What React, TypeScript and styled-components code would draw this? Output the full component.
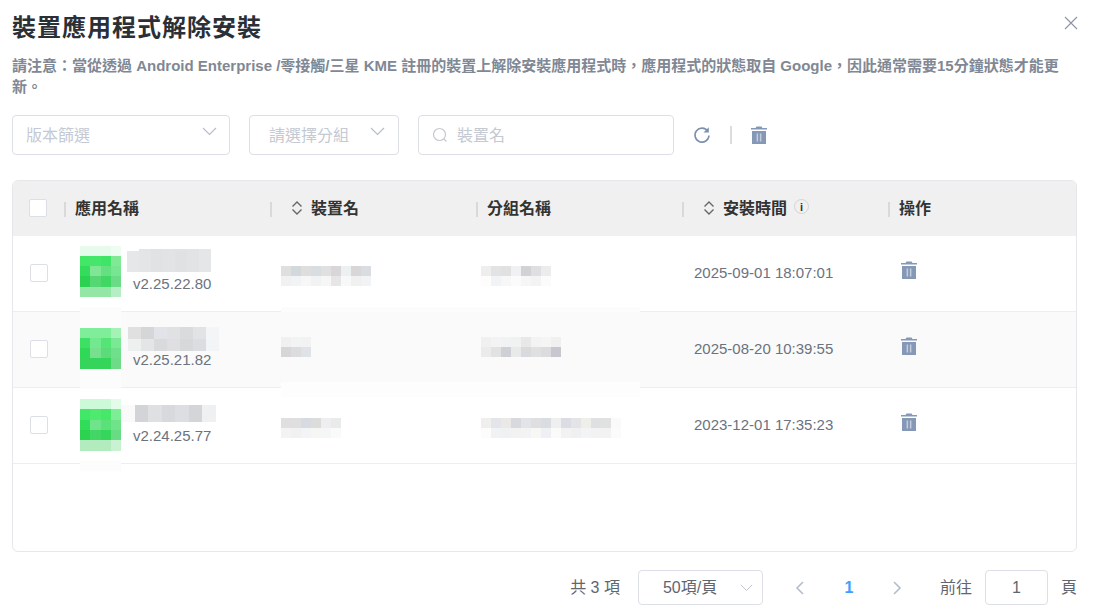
import React from 'react'
import styled, { createGlobalStyle } from 'styled-components'

const FONT = '"Liberation Sans", "Noto Sans CJK TC", sans-serif'

const GlobalStyle = createGlobalStyle`
  html, body {
    margin: 0;
    height: 608px;
    overflow: hidden;
    background: #fff;
    font-family: ${FONT};
  }
`

type MosaicRow = { h: number; cells: string[] }

const Mosaic: React.FC<{ rows: MosaicRow[]; cellWidth: number; className?: string }> = ({
  rows,
  cellWidth,
  className,
}) => {
  const height = rows.reduce((sum, r) => sum + r.h, 0)
  const width = Math.max(...rows.map((r) => r.cells.length)) * cellWidth
  let y = 0
  return (
    <svg className={className} width={width} height={height} shapeRendering="crispEdges">
      {rows.map((row, i) => {
        const top = y
        y += row.h
        return row.cells.map((color, j) =>
          color ? (
            <rect key={`${i}-${j}`} x={j * cellWidth} y={top} width={cellWidth} height={row.h} fill={color} />
          ) : null,
        )
      })}
    </svg>
  )
}

const none = ['', '', '', '']
const pale = (c: string): string[] => [c, c, c, c]

const apps: {
  version: string
  icon: MosaicRow[]
  name: MosaicRow[]
  nameX: number
  nameY: number
  nameCell: number
}[] = [
  {
    version: 'v2.25.22.80',
    icon: [
      { h: 12, cells: none },
      { h: 10, cells: ['#e6fbec', '#e6fbec', '#e6fbec', '#effcf2'] },
      { h: 10, cells: ['#42e768', '#45e66a', '#3fe566', '#7fe996'] },
      { h: 10, cells: ['#33dc5a', '#7fe696', '#64e080', '#78e592'] },
      { h: 11, cells: ['#2bd150', '#55d873', '#41d764', '#6cdb88'] },
      { h: 10, cells: ['#93e6a6', '#93e6a6', '#93e6a6', '#b6eec3'] },
      { h: 10, cells: none },
      { h: 4, cells: pale('#fcfcfc') },
    ],
    name: [
      { h: 2, cells: ['', '#e3e4e6', '#e1e2e4', '#e2e3e5', '#e1e2e4', '#e2e3e5', '#e5e6e8'] },
      { h: 21, cells: ['#e6e7e9', '#e4e5e7', '#e1e2e4', '#e2e3e5', '#e0e1e3', '#e2e3e5', '#e5e6e8'] },
    ],
    nameX: 6,
    nameY: 13,
    nameCell: 12,
  },
  {
    version: 'v2.25.21.82',
    icon: [
      { h: 18, cells: pale('#fcfcfc') },
      { h: 10, cells: ['#80ed9a', '#80ed9a', '#80ed9a', '#a5f2b6'] },
      { h: 10, cells: ['#3de063', '#72e98f', '#55e577', '#7ae995'] },
      { h: 10, cells: ['#2fd957', '#76e08f', '#5cdc79', '#70df8b'] },
      { h: 11, cells: ['#35d45a', '#35d45a', '#35d45a', '#6edb88'] },
      { h: 20, cells: pale('#fcfcfc') },
    ],
    name: [
      { h: 12, cells: ['#e0e0e0', '#d5d6d8', '#e2e3e8', '#e0e1e3', '#dadbdd', '#e2e3e5', '#f4f5f7'] },
      { h: 12, cells: ['#eeefef', '#e4e5e7', '#d9dadc', '#dfdfe2', '#d7d8da', '#dcdde0', '#f3f4f6'] },
    ],
    nameX: 7,
    nameY: 15,
    nameCell: 13,
  },
  {
    version: 'v2.24.25.77',
    icon: [
      { h: 13, cells: none },
      { h: 10, cells: ['#ccf9d7', '#ccf9d7', '#ccf9d7', '#e3fbe9'] },
      { h: 11, cells: ['#41e867', '#4ee96f', '#47e86a', '#7ded96'] },
      { h: 10, cells: ['#31dd58', '#70e48b', '#5be17a', '#6fe38a'] },
      { h: 10, cells: ['#2bd350', '#42d765', '#36d55b', '#68dc84'] },
      { h: 11, cells: ['#b2ecbe', '#b2ecbe', '#b2ecbe', '#c9f2d2'] },
      { h: 10, cells: none },
      { h: 10, cells: pale('#fcfcfc') },
    ],
    name: [
      { h: 17, cells: ['#fafafb', '#d2d4d8', '#dfe0e2', '#d8d9dc', '#dddee1', '#d4d5d9', '#eef0f2'] },
    ],
    nameX: 0,
    nameY: 17,
    nameCell: 13.5,
  },
]

const rowsData: {
  device: MosaicRow[]
  group: MosaicRow[]
  top: number
  time: string
}[] = [
  {
    device: [
      { h: 10, cells: ['#dfdfdf', '#d3d8dc', '#dededd', '#d8dde1', '#e0e0e0', '#d8d6d8', '#ecf0f0', '#d8d6d8', '#d9dde1'] },
      { h: 10, cells: ['#f1f1f1', '#f2f3f4', '#f7f7f7', '#f1f2f4', '#f6f6f6', '#e6e6e6', '#f7f8f8', '#f0f0f0', '#f2f3f5'] },
    ],
    group: [
      { h: 10, cells: ['#eeeeee', '#e2e3e5', '#e1e1e1', '#f0f1f3', '#d2d2d6', '#dfdfe3', '#ebeded'] },
      { h: 10, cells: ['#fdfdfc', '#f2f3f5', '#f7f7f7', '#fbfbfb', '#f6f6f6', '#f3f3f3', '#fbfbfb'] },
    ],
    top: 30,
    time: '2025-09-01 18:07:01',
  },
  {
    device: [
      { h: 10, cells: ['#f0f0f0', '#f2f3f4', '#f2f2f2'] },
      { h: 10, cells: ['#d8d5d8', '#dcdcdf', '#dfe3e8'] },
    ],
    group: [
      { h: 10, cells: ['#f0f0f0', '#f3f3f4', '#f1f2f4', '#f0f2f1', '#e8e8e8', '#f3f3f4', '#f4f5f4', '#f0f0f1'] },
      { h: 10, cells: ['#ebebeb', '#e2e2e3', '#cfd0d5', '#e8eaea', '#dadade', '#dfe0e0', '#dcdcde', '#c6c7cf'] },
    ],
    top: 25,
    time: '2025-08-20 10:39:55',
  },
  {
    device: [
      { h: 10, cells: ['#dfdfdf', '#dfdfdf', '#d7dae0', '#dcdcdc', '#eceef0', '#e9ebea'] },
      { h: 10, cells: ['#f3f3f3', '#f1f1f1', '#f3f4f6', '#f6f6f3', '#f5f6f8', '#fafafa'] },
    ],
    group: [
      { h: 10, cells: ['#efefef', '#e4e5e8', '#ebe9e8', '#d8d9de', '#e3e4e7', '#dfdfe1', '#d9dce1', '#efefef', '#dcdde4', '#e3e4e6', '#eeeeeb', '#dee0e1', '#e0e2e1', '#fafafb'] },
      { h: 10, cells: ['#fcfcfb', '#f1f2f3', '#f0f1f3', '#f2f2f2', '#f2f3f5', '#f7f7f5', '#eff0f3', '#fafafa', '#f2f2f2', '#f0f0f2', '#f3f4f6', '#f1f2f1', '#f1f2f1', '#fbfbfc'] },
    ],
    top: 30,
    time: '2023-12-01 17:35:23',
  },
]

const TrashIcon: React.FC<{ size: number }> = ({ size }) => (
  <svg width={size} height={size * 1.14} viewBox="0 0 16 18">
    <path fill="#8598b6" d="M5.5 0.5h5l1 1.5H16v1.4H0V2h4.5zM1 5h14v13H1z" />
    <path fill="#c3cedd" d="M5.6 7.5h1.5v8H5.6zM8.9 7.5h1.5v8H8.9z" />
  </svg>
)

const SortIcon: React.FC = () => (
  <svg width="12" height="14" viewBox="0 0 12 14" fill="none" stroke="#666" strokeWidth="1.4">
    <path d="M1.5 5.5 6 1l4.5 4.5M1.5 8.5 6 13l4.5-4.5" />
  </svg>
)

const Chevron: React.FC<{ size?: number; color?: string }> = ({ size = 15, color = '#b4bccc' }) => (
  <svg width={size} height={size * 0.6} viewBox="0 0 15 9" fill="none" stroke={color} strokeWidth="1.1">
    <path d="M1 1l6.5 6.5L14 1" />
  </svg>
)

const Page = styled.div`
  box-sizing: border-box;
  width: 1096px;
  height: 608px;
  padding: 0 18px 0 12px;
  background: #fff;
`

const TitleBar = styled.div`
  display: flex;
  justify-content: space-between;
  height: 55px;
`

const Title = styled.h1`
  margin: 0;
  padding-top: 10px;
  font-size: 24px;
  line-height: 36px;
  letter-spacing: 1px;
  font-weight: 700;
  color: #2b2f36;
`

const CloseButton = styled.svg`
  margin-top: 16px;
  width: 14px;
  height: 14px;
  stroke: #8a94a3;
  stroke-width: 1.1;
`

const Note = styled.p`
  margin: 0;
  width: 1056px;
  font-size: 15px;
  line-height: 21px;
  font-weight: 700;
  color: #7f8894;
`

const Filters = styled.div`
  display: flex;
  align-items: center;
  margin-top: 18px;
  height: 40px;
`

const Field = styled.div<{ $width: number; $pad: number; $gap?: number }>`
  box-sizing: border-box;
  display: flex;
  align-items: center;
  justify-content: space-between;
  width: ${({ $width }) => $width}px;
  height: 40px;
  margin-right: ${({ $gap }) => $gap ?? 19}px;
  padding: 0 ${({ $pad }) => $pad}px 2px 13px;
  border: 1px solid #dcdfe6;
  border-radius: 4px;
  font-size: 16px;
  color: #c4c9d2;
`

const SearchField = styled(Field)`
  justify-content: flex-start;
  gap: 9px;

  svg {
    margin-top: 2px;
  }
`

const GroupLabel = styled.span`
  padding-left: 6px;
`

const ChevronUp = styled.span`
  display: flex;
  margin-top: -5px;
`

const ToolIcon = styled.span`
  display: flex;
  margin-left: 19px;
`

const ToolDivider = styled.span`
  width: 2px;
  height: 18px;
  margin-left: 19px;
  background: #dcdcdc;
`

const Table = styled.div`
  box-sizing: border-box;
  margin-top: 25px;
  width: 1065px;
  height: 372px;
  border: 1px solid #e6e7ea;
  border-radius: 6px;
`

const columns = '51px repeat(4, 206px) 1fr'

const HeaderRow = styled.div`
  display: grid;
  grid-template-columns: ${columns};
  height: 55px;
  background: #f0f0f0;
  border-radius: 5px 5px 0 0;
`

const HeaderCell = styled.div`
  position: relative;
  display: flex;
  align-items: center;
  gap: 9px;
  padding: 0 0 4px 11px;
  font-size: 16px;
  font-weight: 700;
  color: #333;

  &::before {
    content: '';
    position: absolute;
    left: 0;
    top: 21px;
    width: 2px;
    height: 15px;
    background: #d9d9d9;
  }

  svg {
    margin: 2px -1px 0 1px;
  }
`

const SortableCell = styled(HeaderCell)`
  padding-left: 20px;
`

const CheckCell = styled.div<{ $left: number }>`
  display: flex;
  align-items: center;
  padding: 0 0 2px ${({ $left }) => $left}px;
`

const Checkbox = styled.span`
  box-sizing: border-box;
  display: block;
  width: 18px;
  height: 18px;
  background: #fff;
  border: 1px solid #dcdfe6;
  border-radius: 2px;
`

const InfoBadge = styled.span`
  box-sizing: border-box;
  display: flex;
  align-items: center;
  justify-content: center;
  width: 15px;
  height: 15px;
  margin-left: -2px;
  border: 1px solid #d4d4d4;
  border-radius: 50%;
  font-size: 11px;
  color: #333;
`

const Row = styled.div<{ $striped: boolean }>`
  position: relative;
  display: grid;
  grid-template-columns: ${columns};
  box-sizing: border-box;
  height: 76px;
  border-bottom: 1px solid #eceef1;
  background: ${({ $striped }) => ($striped ? '#fafafa' : 'transparent')};
`

const BlurBand = styled.div`
  position: absolute;
  left: 268px;
  top: -5px;
  width: 359px;
  height: 90px;
  background: linear-gradient(#fbfcfb 5px, #fafafa 5px, #fafafa 75px, #fdfdfd 75px);
`

const Cell = styled.div`
  position: relative;
`

const AppCell = styled(Cell)`
  padding-left: 16px;
`

const IconMosaic = styled(Mosaic)`
  display: block;
  position: absolute;
  top: -2px;
  left: 16px;
`

const NameMosaic = styled(Mosaic)<{ $x: number; $y: number }>`
  display: block;
  position: absolute;
  left: ${({ $x }) => 57 + $x}px;
  top: ${({ $y }) => $y}px;
`

const Version = styled.div`
  position: relative;
  margin: 39px 0 0 53px;
  font-size: 15px;
  line-height: 18px;
  color: #6b7280;
`

const BlurCell = styled(Cell)<{ $top: number; $left: number }>`
  padding: ${({ $top }) => $top}px 0 0 ${({ $left }) => $left}px;

  svg {
    display: block;
  }
`

const TimeCell = styled(Cell)`
  display: flex;
  align-items: center;
  padding: 0 0 2px 12px;
  font-size: 15px;
  color: #6b7280;
`

const ActionCell = styled(Cell)`
  padding: 25px 0 0 13px;
`

const Pager = styled.div`
  display: flex;
  align-items: center;
  justify-content: flex-end;
  margin-top: 18px;
  width: 1065px;
  height: 35px;
  font-size: 16px;
  color: #5f6670;
`

const PagerText = styled.span`
  padding-bottom: 4px;
`

const PageSize = styled.div`
  box-sizing: border-box;
  display: flex;
  align-items: center;
  justify-content: space-between;
  width: 125px;
  height: 35px;
  margin-left: 18px;
  padding: 0 9px 0 24px;
  border: 1px solid #dcdfe6;
  border-radius: 4px;
`

const PagerArrow = styled.svg`
  width: 10px;
  height: 14px;
  fill: none;
  stroke: #b4bccc;
  stroke-width: 1.6;
`

const PrevArrow = styled(PagerArrow)`
  margin-left: 32px;
`

const CurrentPage = styled.span`
  width: 10px;
  margin: 0 38px 0 39px;
  text-align: center;
  font-weight: 700;
  color: #409eff;
`

const GoLabel = styled(PagerText)`
  margin-left: 38px;
`

const GoInput = styled.div`
  box-sizing: border-box;
  display: flex;
  align-items: center;
  justify-content: center;
  width: 63px;
  height: 35px;
  margin: 0 13px;
  border: 1px solid #dcdfe6;
  border-radius: 4px;
`

const App: React.FC = () => (
  <Page>
    <GlobalStyle />
    <TitleBar>
      <Title>裝置應用程式解除安裝</Title>
      <CloseButton viewBox="0 0 14 14" fill="none">
        <path d="M1 1l12 12M13 1L1 13" />
      </CloseButton>
    </TitleBar>
    <Note>
      請注意：當從透過 Android Enterprise /零接觸/三星 KME 註冊的裝置上解除安裝應用程式時，應用程式的狀態取自 Google，因此通常需要15分鐘狀態才能更新。
    </Note>
    <Filters>
      <Field $width={218} $pad={12}>
        版本篩選
        <ChevronUp>
          <Chevron />
        </ChevronUp>
      </Field>
      <Field $width={150} $pad={13}>
        <GroupLabel>請選擇分組</GroupLabel>
        <ChevronUp>
          <Chevron />
        </ChevronUp>
      </Field>
      <SearchField $width={256} $pad={13} $gap={0}>
        <svg width="16" height="16" viewBox="0 0 16 16" fill="none" stroke="#c4c9d2" strokeWidth="1.2">
          <circle cx="7.5" cy="7.5" r="6" />
          <path d="M12 12l2.5 2.5" />
        </svg>
        裝置名
      </SearchField>
      <ToolIcon>
        <svg width="18" height="18" viewBox="0 0 18 18" fill="none">
          <path d="M14.8 5.2A7 7 0 1 0 16 9.5" stroke="#7b90ae" strokeWidth="1.6" />
          <path d="M15.8 1.2v5.3h-5.3z" fill="#7b90ae" />
        </svg>
      </ToolIcon>
      <ToolDivider />
      <ToolIcon>
        <TrashIcon size={16} />
      </ToolIcon>
    </Filters>
    <Table>
      <HeaderRow>
        <CheckCell $left={16}>
          <Checkbox />
        </CheckCell>
        <HeaderCell>應用名稱</HeaderCell>
        <SortableCell>
          <SortIcon />
          裝置名
        </SortableCell>
        <HeaderCell>分組名稱</HeaderCell>
        <SortableCell>
          <SortIcon />
          安裝時間
          <InfoBadge>i</InfoBadge>
        </SortableCell>
        <HeaderCell>操作</HeaderCell>
      </HeaderRow>
      {rowsData.map((row, i) => {
        const app = apps[i]
        return (
          <Row key={row.time} $striped={i === 1}>
            {i === 1 && <BlurBand />}
            <CheckCell $left={17}>
              <Checkbox />
            </CheckCell>
            <AppCell>
              <IconMosaic rows={app.icon} cellWidth={10.25} />
              <NameMosaic rows={app.name} cellWidth={app.nameCell} $x={app.nameX} $y={app.nameY} />
              <Version>{app.version}</Version>
            </AppCell>
            <BlurCell $top={row.top} $left={11}>
              <Mosaic rows={row.device} cellWidth={10} />
            </BlurCell>
            <BlurCell $top={row.top} $left={5}>
              <Mosaic rows={row.group} cellWidth={10} />
            </BlurCell>
            <TimeCell>{row.time}</TimeCell>
            <ActionCell>
              <TrashIcon size={16} />
            </ActionCell>
          </Row>
        )
      })}
    </Table>
    <Pager>
      <PagerText>共 3 項</PagerText>
      <PageSize>
        <PagerText>50項/頁</PagerText>
        <Chevron size={13} color="#c0c4cc" />
      </PageSize>
      <PrevArrow viewBox="0 0 10 14">
        <path d="M8 1L2 7l6 6" />
      </PrevArrow>
      <CurrentPage>1</CurrentPage>
      <PagerArrow viewBox="0 0 10 14">
        <path d="M2 1l6 6-6 6" />
      </PagerArrow>
      <GoLabel>前往</GoLabel>
      <GoInput>1</GoInput>
      <PagerText>頁</PagerText>
    </Pager>
  </Page>
)

export default App
